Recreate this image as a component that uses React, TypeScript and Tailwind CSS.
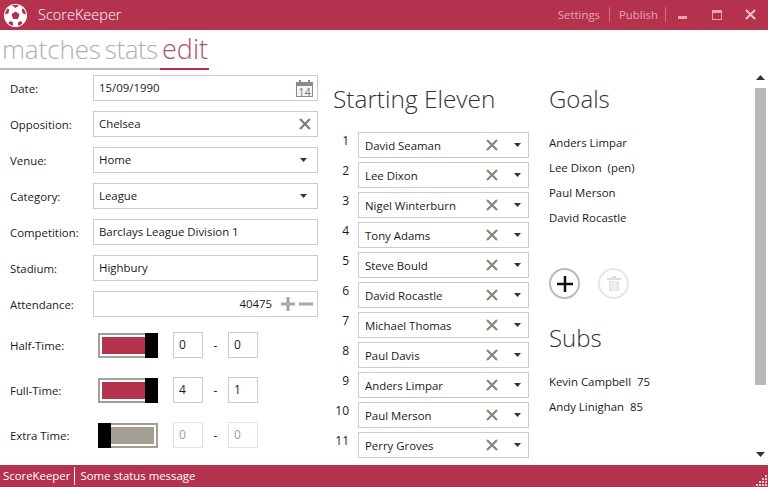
import React from "react";

const players = [
  "David Seaman",
  "Lee Dixon",
  "Nigel Winterburn",
  "Tony Adams",
  "Steve Bould",
  "David Rocastle",
  "Michael Thomas",
  "Paul Davis",
  "Anders Limpar",
  "Paul Merson",
  "Perry Groves",
];

const goals = ["Anders Limpar", "Lee Dixon  (pen)", "Paul Merson", "David Rocastle"];

const Caret = () => (
  <svg width="7" height="4" viewBox="0 0 7 4" className="shrink-0">
    <path d="M0 0h7L3.500 4z" fill="#333333" />
  </svg>
);

const Cross = ({ color = "#808080", size = 12 }: { color?: string; size?: number }) => (
  <svg width={size} height={size} viewBox="0 0 12 12" className="shrink-0">
    <path d="M1 1l10 10M11 1L1 11" stroke={color} strokeWidth="2.2" fill="none" />
  </svg>
);

const Ball = () => (
  <svg width="23" height="23" viewBox="0 0 26 26" className="shrink-0">
    <circle cx="13" cy="13" r="13" fill="white" />
    <path d="M13 8.500l4.500 3.200-1.700 5.300h-5.600l-1.700-5.300z" fill="#B5324F" />
    <path d="M9 1.600c2.600-.7 5.400-.7 8 0L13 4.600z" fill="#B5324F" />
    <path d="M22 5.200c1.700 2 2.600 4.300 2.700 6.800l-3.800-1.600-.8-4.400z" fill="#B5324F" />
    <path d="M4 5.200C2.300 7.200 1.400 9.500 1.300 12l3.800-1.600.8-4.400z" fill="#B5324F" />
    <path d="M4.800 21.800c1.400 1.400 3.200 2.400 5.200 2.900l.3-3.800-3.200-1.700z" fill="#B5324F" />
    <path d="M21.200 21.800c-1.400 1.400-3.200 2.400-5.200 2.900l-.3-3.800 3.200-1.700z" fill="#B5324F" />
  </svg>
);

const CalendarIcon = () => (
  <svg width="17" height="17" viewBox="0 0 17 17" className="shrink-0">
    <rect x="0.5" y="2.5" width="16" height="14" fill="#f6f6f6" stroke="#8a8a8a" />
    <rect x="0" y="2" width="17" height="4" fill="#8a8a8a" />
    <rect x="3" y="0" width="2" height="4" fill="#8a8a8a" />
    <rect x="12" y="0" width="2" height="4" fill="#8a8a8a" />
    <text x="8.500" y="15.500" textAnchor="middle" fontSize="11" fill="#777777">
      14
    </text>
  </svg>
);

const Row = ({ label, children }: { label: string; children: React.ReactNode }) => (
  <div className="flex h-[26px] items-center">
    <span className="w-[93px] pl-[10px] pt-[1px] text-[11.4px] text-[#1a1a1a]">{label}</span>
    <div className="flex h-[26px] w-[225px] items-center border border-[#cccccc] pl-[5px] pr-[4px] text-[11.4px] text-[#1a1a1a]">
      {children}
    </div>
  </div>
);

const Toggle = ({ on }: { on: boolean }) => (
  <div className="relative ml-[5px] h-[25px] w-[60px] border-[2px] border-[#a59e92] p-[2px]">
    <div className={on ? "h-full w-full bg-[#B5324F]" : "h-full w-full bg-[#a59e92]"} />
    <div className={on ? "absolute -top-[2px] -right-[2px] h-[25px] w-[13px] bg-black" : "absolute -top-[2px] -left-[2px] h-[25px] w-[13px] bg-black"} />
  </div>
);

const ScoreRow = ({ label, on, a, b }: { label: string; on: boolean; a: string; b: string }) => (
  <div className="flex h-[26px] items-center">
    <span className="w-[93px] pl-[10px] pt-[1px] text-[11.4px] text-[#1a1a1a]">{label}</span>
    <Toggle on={on} />
    <div
      className={`ml-[15px] flex h-[26px] w-[30px] items-center border pl-[5px] text-[12px] ${
        on ? "border-[#cccccc] text-[#1a1a1a]" : "border-[#e4e4e4] text-[#a0a0a0]"
      }`}
    >
      {a}
    </div>
    <span className="w-[25px] pt-[2px] text-center text-[12px] text-[#1a1a1a]">-</span>
    <div
      className={`flex h-[26px] w-[30px] items-center border pl-[5px] text-[12px] ${
        on ? "border-[#cccccc] text-[#1a1a1a]" : "border-[#e4e4e4] text-[#a0a0a0]"
      }`}
    >
      {b}
    </div>
  </div>
);

export default function App() {
  return (
    <div className="flex h-[487px] w-[768px] flex-col overflow-hidden bg-white font-['Open_Sans',sans-serif]">
      {/* TITLE BAR */}
      <div className="flex h-[30px] shrink-0 items-center bg-[#B5324F] pl-[4px]">
        <Ball />
        <span className="ml-[11px] text-[14.500px] font-light text-white">ScoreKeeper</span>
        <div className="ml-auto flex items-center text-[11.4px] text-[#e7a3b1]">
          <span className="pr-[9px]">Settings</span>
          <span className="h-[15px] w-px bg-[#cf7085]" />
          <span className="pl-[9px] pr-[7px]">Publish</span>
          <span className="h-[15px] w-px bg-[#cf7085]" />
          <span className="ml-[12px] mt-[5px] h-[3px] w-[9px] bg-[#e7a3b1]" />
          <span className="ml-[25px] h-[10px] w-[10px] border border-t-[3px] border-[#e7a3b1]" />
          <span className="ml-[23px] mr-[12px]">
            <Cross color="#efc0ca" size={11} />
          </span>
        </div>
      </div>

      {/* TABS */}
      <div className="flex h-[40px] shrink-0 items-start">
        <div className="flex h-[40px] w-[160px] items-start border-b-[2px] border-[#bbbbbb] pl-[2px] text-[26px] leading-[38px] font-light text-[#b0b0b0]">
          <span className="tracking-[-0.1px]">matches</span>
          <span className="ml-[4px] tracking-[-0.5px]">stats</span>
        </div>
        <div className="h-[40px] w-[49px] border-b-[2px] border-[#B5324F] pl-[2px] text-[27px] leading-[38px] font-light text-[#B0506A]">
          edit
        </div>
      </div>

      {/* CONTENT */}
      <div className="flex min-h-0 flex-1">
        {/* FORM */}
        <div className="flex w-[333px] shrink-0 flex-col pt-[5px]">
          <div className="flex flex-col gap-[10px]">
            <Row label="Date:">
              <span className="flex-1">15/09/1990</span>
              <CalendarIcon />
            </Row>
            <Row label="Opposition:">
              <span className="flex-1">Chelsea</span>
              <span className="mr-[2px]">
                <Cross color="#7c7c7c" />
              </span>
            </Row>
            <Row label="Venue:">
              <span className="flex-1">Home</span>
              <span className="mr-[6px]">
                <Caret />
              </span>
            </Row>
            <Row label="Category:">
              <span className="flex-1">League</span>
              <span className="mr-[6px]">
                <Caret />
              </span>
            </Row>
            <Row label="Competition:">Barclays League Division 1</Row>
            <Row label="Stadium:">Highbury</Row>
            <Row label="Attendance:">
              <span className="flex-1 pr-[9px] text-right">40475</span>
              <svg width="32" height="14" viewBox="0 0 32 14" className="shrink-0">
                <path d="M7 0v14M0 7h14M18 7h14" stroke="#a8a8a8" strokeWidth="3" fill="none" />
              </svg>
            </Row>
          </div>
          <div className="mt-[15px] flex flex-col gap-[19px]">
            <ScoreRow label="Half-Time:" on a="0" b="0" />
            <ScoreRow label="Full-Time:" on a="4" b="1" />
            <ScoreRow label="Extra Time:" on={false} a="0" b="0" />
          </div>
        </div>

        {/* STARTING ELEVEN */}
        <div className="flex w-[216px] shrink-0 flex-col">
          <h2 className="mt-[12px] text-[24.400px] leading-[34px] font-light text-[#333333]">Starting Eleven</h2>
          <div className="mt-[16px] flex flex-col gap-[4px]">
            {players.map((name, i) => (
              <div key={name} className="flex h-[26px] w-[196px] items-start">
                <span className="w-[25px] pl-[1px] pr-[9px] text-right text-[12px] leading-[18px] text-[#1a1a1a]">{i + 1}</span>
                <div className="flex h-[26px] flex-1 items-center border border-[#cccccc] pl-[6px] text-[11.4px] text-[#1a1a1a]">
                  <span className="flex-1 pt-[1px]">{name}</span>
                  <Cross color="#8f8576" />
                  <span className="ml-[16px] mr-[7px]">
                    <Caret />
                  </span>
                </div>
              </div>
            ))}
          </div>
        </div>

        {/* GOALS / SUBS */}
        <div className="flex flex-1 flex-col">
          <h2 className="mt-[12px] text-[24px] leading-[34px] font-light text-[#333333]">Goals</h2>
          <div className="mt-[18px] flex flex-col gap-[7px]">
            {goals.map((g) => (
              <span key={g} className="whitespace-pre text-[11.4px] leading-[18px] text-[#1a1a1a]">
                {g}
              </span>
            ))}
          </div>
          <div className="mt-[41px] flex gap-[18px]">
            <div className="flex h-[31px] w-[31px] items-center justify-center rounded-full border-[2px] border-[#bbbbbb]">
              <svg width="16" height="16" viewBox="0 0 16 16">
                <path d="M8 0v16M0 8h16" stroke="#111111" strokeWidth="2.500" fill="none" />
              </svg>
            </div>
            <div className="flex h-[31px] w-[31px] items-center justify-center rounded-full border-[2px] border-[#e6e6e6]">
              <svg width="14" height="15" viewBox="0 0 14 15">
                <path d="M5 1h4M0 3h14" stroke="#dddddd" strokeWidth="2" fill="none" />
                <path d="M2 5h10v10H2z" fill="#e4e4e4" />
                <path d="M5 6v8M7 6v8M9 6v8" stroke="#ffffff" strokeWidth="0.8" fill="none" />
              </svg>
            </div>
          </div>
          <h2 className="mt-[22px] text-[24px] leading-[34px] font-light text-[#333333]">Subs</h2>
          <div className="mt-[18px] flex flex-col gap-[7px]">
            <span className="whitespace-pre text-[11.4px] leading-[18px] text-[#1a1a1a]">Kevin Campbell  75</span>
            <span className="whitespace-pre text-[11.4px] leading-[18px] text-[#1a1a1a]">Andy Linighan  85</span>
          </div>
        </div>

        {/* SCROLLBAR */}
        <div className="mr-[2px] flex w-[11px] shrink-0 flex-col items-center pt-[5px]">
          <svg width="9" height="5" viewBox="0 0 9 5" className="shrink-0">
            <path d="M0 5h9L4.500 0z" fill="#333333" />
          </svg>
          <div className="mt-[8px] h-[297px] w-[11px] bg-[#b9b9b9]" />
          <svg width="9" height="5" viewBox="0 0 9 5" className="mt-[67px] shrink-0">
            <path d="M0 0h9L4.500 5z" fill="#333333" />
          </svg>
        </div>
      </div>

      {/* STATUS BAR */}
      <div className="relative flex h-[22px] shrink-0 items-center bg-[#B5324F] pl-[3px] text-[11.4px] text-white">
        <span className="pr-[4px]">ScoreKeeper</span>
        <span className="h-[18px] w-px bg-white" />
        <span className="pl-[5px]">Some status message</span>
        <svg width="11" height="11" viewBox="0 0 11 11" className="absolute right-[1px] bottom-[1px]">
          <path d="M9 0h2v2H9zM6 3h2v2H6zM9 3h2v2H9zM3 6h2v2H3zM6 6h2v2H6zM9 6h2v2H9zM0 9h2v2H0zM3 9h2v2H3zM6 9h2v2H6zM9 9h2v2H9z" fill="#f3c9d2" />
        </svg>
      </div>
    </div>
  );
}
